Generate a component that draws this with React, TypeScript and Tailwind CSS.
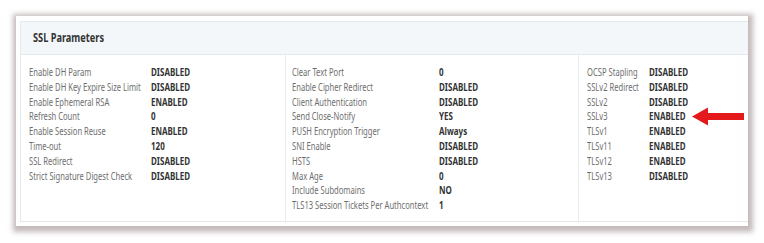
import React from 'react';

const font = { fontFamily: '"Noto Sans", "Open Sans", "Liberation Sans", sans-serif' };

const SslParameters: React.FC = () => {
  const columns = [
    {
      className: 'w-[264px] pl-2',
      labelWidth: 'w-[122px]',
      rows: [
        ['Enable DH Param', 'DISABLED'],
        ['Enable DH Key Expire Size Limit', 'DISABLED'],
        ['Enable Ephemeral RSA', 'ENABLED'],
        ['Refresh Count', '0'],
        ['Enable Session Reuse', 'ENABLED'],
        ['Time-out', '120'],
        ['SSL Redirect', 'DISABLED'],
        ['Strict Signature Digest Check', 'DISABLED'],
      ],
    },
    {
      className: 'w-[293px] pl-[6px] border-l border-[#e8ebee]',
      labelWidth: 'w-[147px]',
      rows: [
        ['Clear Text Port', '0'],
        ['Enable Cipher Redirect', 'DISABLED'],
        ['Client Authentication', 'DISABLED'],
        ['Send Close-Notify', 'YES'],
        ['PUSH Encryption Trigger', 'Always'],
        ['SNI Enable', 'DISABLED'],
        ['HSTS', 'DISABLED'],
        ['Max Age', '0'],
        ['Include Subdomains', 'NO'],
        ['TLS13 Session Tickets Per Authcontext', '1'],
      ],
    },
    {
      className: 'flex-1 pl-2 border-l border-[#e8ebee]',
      labelWidth: 'w-[62px]',
      rows: [
        ['OCSP Stapling', 'DISABLED'],
        ['SSLv2 Redirect', 'DISABLED'],
        ['SSLv2', 'DISABLED'],
        ['SSLv3', 'ENABLED'],
        ['TLSv1', 'ENABLED'],
        ['TLSv11', 'ENABLED'],
        ['TLSv12', 'ENABLED'],
        ['TLSv13', 'DISABLED'],
      ],
    },
  ];

  return (
    <div className="w-[764px] h-[243px] bg-white pt-4 pl-4" style={font}>
      <div className="relative w-[732px] h-[210px] bg-white overflow-hidden shadow-[1px_2px_5px_4px_rgba(150,132,132,0.55)] pt-[5px] pl-1">
        <div className="w-[740px] border border-[#e3e8ec] bg-white">
          <div className="h-[33px] bg-[#f3f7fa] border-b border-[#e3e8ec] flex items-center pl-3">
            <span className="inline-block origin-left scale-x-[0.8] text-[11.5px] font-bold text-[#333] whitespace-nowrap">SSL Parameters</span>
          </div>
          <div className="flex h-[166px]">
            {columns.map((col, i) => (
              <div key={i} className={`${col.className} pt-[10px]`}>
                {col.rows.map(([label, value], j) => (
                  <div key={j} className="flex h-[14.8px] items-center text-[10px] leading-[14.8px]">
                    <div className={`${col.labelWidth} shrink-0`}>
                      <span className="inline-block origin-left scale-x-[0.76] text-[#6e6e6e] whitespace-nowrap">{label}</span>
                    </div>
                    <span className="inline-block origin-left scale-x-[0.8] font-bold text-[#333] whitespace-nowrap">{value}</span>
                  </div>
                ))}
              </div>
            ))}
          </div>
        </div>
        <svg className="absolute left-[676px] top-[91px]" width="54" height="20" viewBox="0 0 54 20">
          <polygon points="0,9.5 16,0.5 16,6 52,6 52,13 16,13 16,18.5" fill="#e3191c" />
        </svg>
      </div>
    </div>
  );
};

export default function App() {
  return <SslParameters />;
}
